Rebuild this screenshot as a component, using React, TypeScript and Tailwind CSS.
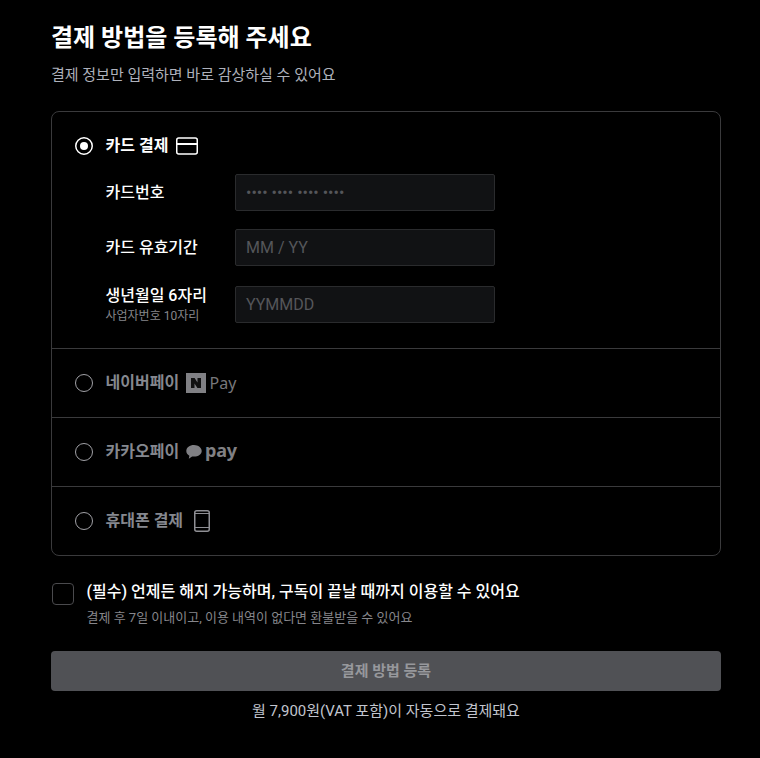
import React from 'react';

const FONT = "font-['Roboto','Noto_Sans_CJK_KR',sans-serif]";

const Radio = ({ checked = false }: { checked?: boolean }) => (
  <svg width="18" height="18" viewBox="0 0 18 18" fill="none" className="shrink-0">
    {checked ? (
      <>
        <circle cx="9" cy="9" r="8.250" stroke="#fff" strokeWidth="1.500" />
        <circle cx="9" cy="9" r="4" fill="#fff" />
      </>
    ) : (
      <circle cx="9" cy="9" r="8.500" stroke="#a1a1a6" />
    )}
  </svg>
);

const CardIcon = () => (
  <svg width="22" height="18" viewBox="0 0 22 18" fill="none" className="shrink-0">
    <rect x="0.750" y="1" width="20.500" height="16" rx="2" stroke="#fff" strokeWidth="1.500" />
    <rect x="1" y="6" width="20" height="2" fill="#fff" />
  </svg>
);

const NaverLogo = () => (
  <span className="flex items-center gap-[4px]">
    <svg width="20" height="20" viewBox="0 0 20 20" className="shrink-0">
      <rect width="20" height="20" fill="#808084" />
      <path d="M5 5h3.600l2.900 4.400V5H15v10h-3.600L8.500 10.600V15H5z" fill="#111" />
    </svg>
    <span className="font-['Noto_Sans',sans-serif] text-[16px] leading-5 text-[#77777b]">Pay</span>
  </span>
);

const KakaoLogo = () => (
  <span className="flex items-center gap-[3.500px]">
    <svg width="16" height="16" viewBox="0 0 16 16" className="mb-[1px] shrink-0">
      <path
        d="M8 1C3.700 1 .3 3.600.3 6.900c0 2 1.200 3.700 3.100 4.800l-.6 3.100 3.300-2.300c.6.100 1.200.1 1.900.1 4.300 0 7.700-2.600 7.700-5.700S12.300 1 8 1z"
        fill="#808084"
      />
    </svg>
    <span className="mb-[5px] font-['Noto_Sans',sans-serif] text-[18px] font-bold leading-5 tracking-[-0.3px] text-[#808084]">
      pay
    </span>
  </span>
);

const PhoneIcon = () => (
  <svg width="16" height="22" viewBox="0 0 16 22" fill="none" className="ml-[4px] shrink-0">
    <rect x="0.750" y="0.750" width="14.500" height="20.500" rx="2" stroke="#8f8f94" strokeWidth="1.500" />
    <path d="M0.600 3.500h14.800M0.600 17.500h14.800" stroke="#8f8f94" />
  </svg>
);

const FieldRow = ({
  label,
  sub,
  placeholder,
  className = '',
}: {
  label: string;
  sub?: string;
  placeholder: string;
  className?: string;
}) => (
  <div className={`flex items-center ${className}`}>
    <div className={`w-[129.500px] shrink-0 ${sub ? 'pt-[1px]' : ''}`}>
      <div className="text-[16px] font-medium leading-[20px] text-white">{label}</div>
      {sub && <div className="mt-[2px] text-[12px] leading-[16px] text-[#86868b]">{sub}</div>}
    </div>
    <div className="flex h-[37px] w-[260px] items-center rounded-[2px] border border-[#2a2b2d] bg-[#111214] px-[10px] text-[16px] text-[#55565a]">
      {placeholder}
    </div>
  </div>
);

const PayRow = ({ label, children }: { label: string; children: React.ReactNode }) => (
  <div className="flex h-[69px] items-center gap-[12.500px] border-t border-[#3a3a3c] pl-[23px]">
    <Radio />
    <div className="flex items-center gap-[6.500px]">
      <span className="text-[16px] font-bold leading-5 text-[#85888f]">{label}</span>
      {children}
    </div>
  </div>
);

export default function App() {
  return (
    <div className={`${FONT} h-[758px] overflow-hidden bg-black pl-[51px] pr-[39px] pt-[21px]`}>
      <h1 className="text-[24px] font-bold leading-[34px] text-white">결제 방법을 등록해 주세요</h1>
      <p className="mt-[9px] text-[15px] leading-[22px] text-[#aeb1bb]">
        결제 정보만 입력하면 바로 감상하실 수 있어요
      </p>

      <div className="mt-[25px] overflow-hidden rounded-[8px] border border-[#3a3a3c]">
        <div className="h-[236px] pl-[23px] pt-[23px]">
          <div className="flex h-[22px] items-center gap-[12.500px]">
            <Radio checked />
            <div className="flex items-center gap-[7.500px]">
              <span className="text-[16px] font-bold leading-5 text-white">카드 결제</span>
              <CardIcon />
            </div>
          </div>
          <div className="pl-[30.500px]">
            <FieldRow className="mt-[17px]" label="카드번호" placeholder="•••• •••• •••• ••••" />
            <FieldRow className="mt-[18px]" label="카드 유효기간" placeholder="MM / YY" />
            <FieldRow className="mt-[19px]" label="생년월일 6자리" sub="사업자번호 10자리" placeholder="YYMMDD" />
          </div>
        </div>
        <PayRow label="네이버페이">
          <NaverLogo />
        </PayRow>
        <PayRow label="카카오페이">
          <KakaoLogo />
        </PayRow>
        <PayRow label="휴대폰 결제">
          <PhoneIcon />
        </PayRow>
      </div>

      <div className="mt-[26px] flex gap-[12.500px] pl-[1px]">
        <span className="mt-[1px] h-[22px] w-[22px] shrink-0 rounded-[4px] border border-[#4a4a4d]" />
        <div>
          <div className="text-[16px] font-medium leading-[20px] text-white">
            (필수) 언제든 해지 가능하며, 구독이 끝날 때까지 이용할 수 있어요
          </div>
          <div className="mt-[7px] text-[13px] leading-[18px] text-[#86868b]">
            결제 후 7일 이내이고, 이용 내역이 없다면 환불받을 수 있어요
          </div>
        </div>
      </div>

      <button className="mt-[24px] flex h-[40px] w-full items-center justify-center rounded-[4px] bg-[#505155] text-[15px] font-bold text-[#97989c]">
        결제 방법 등록
      </button>
      <p className="mt-[10px] text-center text-[15px] leading-[20px] text-[#c2c5ce]">
        월 7,900원(VAT 포함)이 자동으로 결제돼요
      </p>
    </div>
  );
}
